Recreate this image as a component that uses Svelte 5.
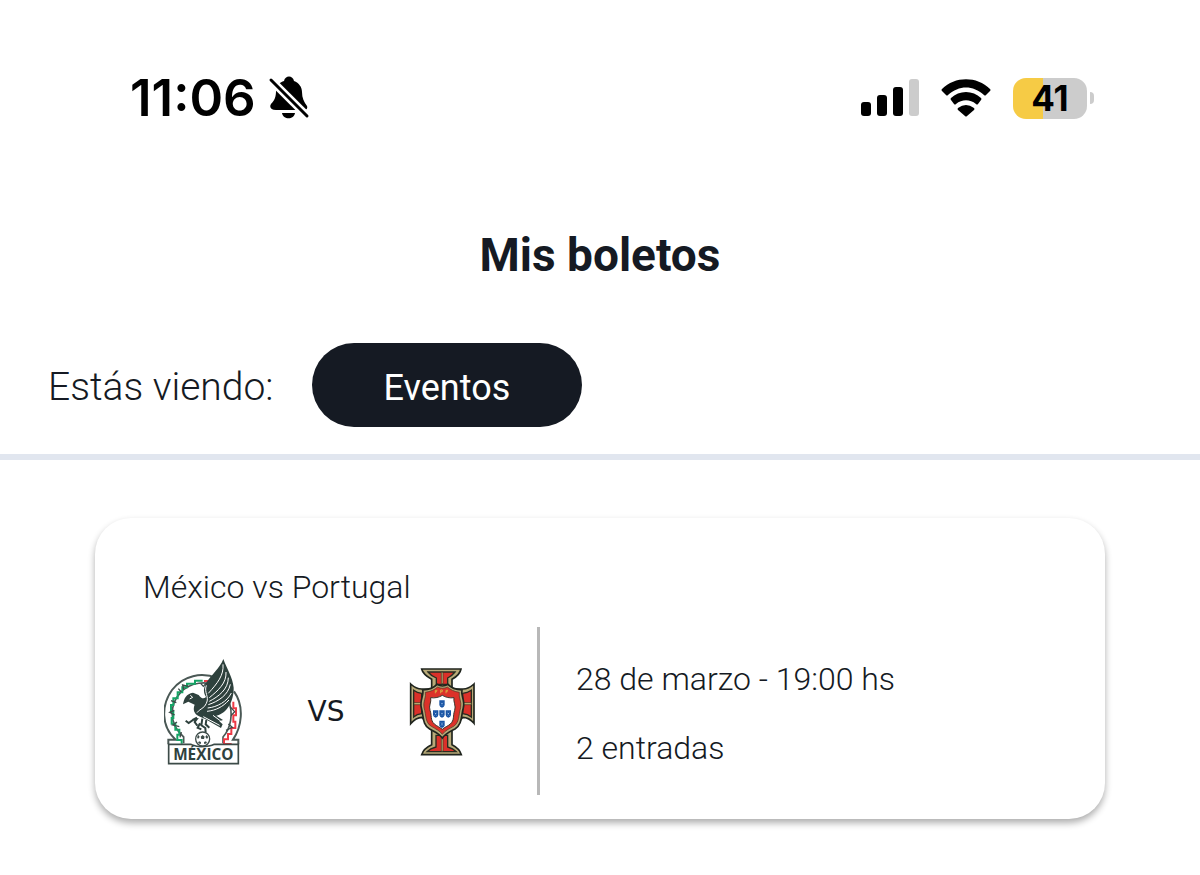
<script>
  const matches = [
    { home: 'México', away: 'Portugal', when: '28 de marzo - 19:00 hs', tickets: '2 entradas' }
  ];
</script>

<div class="screen">
  <div class="status">
    <div class="clock">
      <span class="time">11:06</span>
      <svg class="bell" viewBox="0 0 42 44" role="img" aria-label="Silencio">
        <path d="M8 34C3 34 1 31 3 28C7 24 8 20 8 15C9 9 12 6 16 5C17-1 25-1 26 5C31 7 34 11 34 16C34 22 36 26 39 30C40 33 38 34 35 34Z" />
        <path d="M14 37H27C26 44 15 44 14 37Z" />
        <path d="M2 3L40 41" stroke="#fff" stroke-width="8" />
        <path d="M3 4L39 40" stroke="#000" stroke-width="3" stroke-linecap="round" />
      </svg>
    </div>
    <div class="indicators">
      <svg class="signal" viewBox="0 0 58 38" role="img" aria-label="Señal">
        <rect x="0" y="23" width="10" height="14" rx="3" />
        <rect x="16" y="16" width="10" height="21" rx="3" />
        <rect x="32" y="8" width="10" height="29" rx="3" />
        <rect x="48" y="0" width="10" height="37" rx="3" fill="#ccc" />
      </svg>
      <svg class="wifi" viewBox="0 0 50 38" role="img" aria-label="Wi-Fi">
        <path d="M1 10C14-3 36-3 49 10Q50 11 49 12L45 16Q44 17 43 16C32 6 18 6 7 16Q6 17 5 16L1 12Q0 11 1 10Z" />
        <path d="M10 19C18 11 32 11 40 19Q41 20 40 21L37 25Q36 26 35 25C29 20 21 20 15 25Q14 26 13 25L10 21Q9 20 10 19Z" />
        <path d="M17 29Q25 23 33 29Q34 30 33 31L26 37Q25 38 24 37L17 31Q16 30 17 29Z" />
      </svg>
      <div class="battery"><span class="cell">41</span><span class="tip"></span></div>
    </div>
  </div>

  <header>
    <h1>Mis boletos</h1>
    <div class="filter">
      <span id="viewing">Estás viendo:</span>
      <button type="button" aria-describedby="viewing">Eventos</button>
    </div>
  </header>

  <main>
    {#each matches as match}
      <article>
        <h2>{match.home} vs {match.away}</h2>
        <div class="match">
          <div class="teams">
            <svg class="mexico" viewBox="27 27 237 321" role="img" aria-label={match.home}>
              <g fill="none">
                <path d="M40 286V272H62C17 232 19 168 51 123C84 79 141 68 187 88M237 127C270 174 259 235 234 272H250V286" stroke="#4a5855" stroke-width="6" />
                <path d="M86 283V264C39 223 44 166 77 130C109 98 155 96 182 110M218 149C239 194 225 242 204 264V283" stroke="#4a5855" stroke-width="5" />
                <path d="M143 95H120V104H96V115H82V130H68V148H55V168H48V188H55V207H50V224H61V242H73V257H67V273H80V284" stroke="#16a365" stroke-width="6" />
                <path d="M147 96H170V103H184M235 158V178H243V199H235V218H241V237H229V255H219V271H207V285H230" stroke="#ed3b46" stroke-width="6" />
                <path d="M79 129L70 119M86 122L83 108L102 113M137 103L145 112L153 103M64 161L48 155M58 184L44 190L59 198M66 219L53 228L73 233M79 249L75 265M225 173L239 188L228 200M220 225L232 235L213 244" stroke="#3c4b48" stroke-width="4" />
              </g>
              <path d="M41 286H107C118 290 123 293 138 293S169 291 178 286H250V344H41Z" fill="#fff" stroke="#3c4b48" stroke-width="5" />
              <path d="M205 30C194 59 170 76 153 102C145 119 145 130 153 144C146 151 139 149 131 138L114 131C94 134 87 148 84 166L100 158L119 167C113 182 117 194 132 202L152 211L198 237L203 226L193 217L204 213L184 200C214 194 237 158 236 116C233 86 216 60 205 30Z" fill="#2e413d" />
              <g fill="none" stroke="#fff" stroke-width="3">
                <path d="M204 46C207 79 187 103 160 133" />
                <path d="M213 69C215 102 190 124 163 146" />
                <path d="M220 86C220 121 190 143 163 157" />
                <path d="M226 106C219 139 190 157 160 167" />
                <path d="M229 132C216 158 187 174 158 177" />
                <path d="M222 153C203 174 183 184 156 187" />
                <path d="M154 109C146 131 164 143 154 163C149 178 133 180 126 191" />
                <path d="M106 139L113 145L104 150M145 203L194 229M174 199L197 216" />
              </g>
              <path d="M92 215L101 222L115 212L125 211L119 219L127 230M126 206L113 213M142 209L139 229L151 237L152 251M135 223L128 236L139 241M154 213L152 226L163 236" fill="none" stroke="#2e413d" stroke-width="6" />
              <circle cx="143" cy="270" r="21" fill="#fff" stroke="#3c4b48" stroke-width="4" />
              <path d="M137 263L143 258L149 263L147 270H139ZM126 264L131 258L134 264L129 270ZM160 264L154 258L151 264L156 270ZM132 277L138 279L137 286L129 282ZM153 277L147 279L148 286L156 282Z" fill="#3c4b48" />
              <text x="145" y="334" text-anchor="middle">MÉXICO</text>
            </svg>
            <span class="versus">VS</span>
            <svg class="portugal" viewBox="42 33 201 267" role="img" aria-label={match.away}>
              <path d="M80 39H198C196 51 185 62 171 70V99H204C215 99 226 94 237 84V202C227 190 216 184 203 184L171 220V266C185 273 195 282 199 296H80C84 282 95 273 110 266V220L81 184C68 184 57 191 47 203V84C58 94 69 99 80 99H110V70C96 62 83 52 80 39Z" fill="#b8aa78" stroke="#20251e" stroke-width="5" />
              <path d="M99 48H180C172 58 164 63 158 66V85H124V66C114 62 106 57 99 48ZM56 103Q66 111 80 112V173Q66 174 56 183ZM229 103Q218 111 203 112V173Q218 174 229 183ZM123 238H158V273C170 276 178 281 184 287H96C103 280 111 276 123 273Z" fill="#db3029" stroke="#292c20" stroke-width="4" />
              <path d="M139 49H144V83H139ZM139 236H144V286H139ZM57 140H80V146H57ZM203 140H229V146H203Z" fill="#c9b77a" stroke="#3a3421" stroke-width="2" />
              <path d="M83 102C101 101 117 95 126 85C136 91 149 91 159 85C168 95 184 101 201 102C196 117 211 132 205 155C198 181 202 205 180 219C163 228 152 232 142 246C132 232 120 228 104 219C82 207 86 181 79 155C73 133 88 116 83 102Z" fill="#b8aa78" stroke="#20251e" stroke-width="5" />
              <path d="M91 109C107 107 119 101 128 93C137 98 149 98 157 93C166 101 178 107 193 109C190 124 201 138 197 155C190 179 194 198 176 211C161 219 150 224 142 235C134 224 122 219 109 211C90 200 94 178 87 155C83 138 95 122 91 109Z" fill="#dc3229" stroke="#443322" stroke-width="2" />
              <path d="M107 125C119 127 133 124 142 118C151 124 165 127 177 125C174 136 184 150 179 163C173 180 179 192 166 204C158 211 149 213 142 220C134 213 126 211 118 204C105 192 111 178 105 163C100 150 110 138 107 125Z" fill="#fff" stroke="#39352c" stroke-width="3" />
              {#each [[141, 143], [122, 173], [141, 173], [160, 173], [141, 204]] as [x, y]}
                <path transform={`translate(${x} ${y})`} d="M-8-10H8V4Q7 11 0 12Q-7 11-8 4Z" fill="#1753a4" />
                <g transform={`translate(${x} ${y})`} fill="#b9d5f1">
                  <circle cx="-3" cy="-5" r="1" /><circle cx="3" cy="-5" r="1" />
                  <circle cx="0" cy="0" r="2" /><circle cx="-3" cy="5" r="1" /><circle cx="3" cy="5" r="1" />
                </g>
              {/each}
              <path d="M121 112V103H127M121 107H126M137 112V102H142V107H137M153 112V103H159M153 107H158" fill="none" stroke="#d9a43d" stroke-width="3" />
            </svg>
          </div>
          <div class="details">
            <p>{match.when}</p>
            <p>{match.tickets}</p>
          </div>
        </div>
      </article>
    {/each}
  </main>
</div>

<style>
  :global(body) { margin: 0; background: #fff; }
  .screen { color: #151a23; font-family: Roboto, sans-serif; }
  svg { display: block; flex: none; }
  .status {
    display: flex;
    align-items: center;
    justify-content: space-between;
    padding: 68px 106px 0 130px;
    color: #000;
    font-family: Inter, sans-serif;
  }
  .clock, .indicators { display: flex; align-items: center; }
  .clock { gap: 12px; }
  .time { font-size: 51px; line-height: 60px; font-weight: 600; }
  .bell { width: 42px; height: 44px; }
  .indicators { gap: 22px; }
  .signal { width: 58px; height: 38px; }
  .wifi { width: 50px; height: 38px; }
  .battery { display: flex; align-items: center; gap: 3px; }
  .cell {
    width: 74px;
    border-radius: 13px;
    background: linear-gradient(90deg, #f6cb45 41%, #ccc 41%);
    font-size: 35px;
    line-height: 41px;
    font-weight: 700;
    text-align: center;
  }
  .tip { width: 4px; height: 12px; border-radius: 0 6px 6px 0; background: #ccc; }
  header { padding: 99px 48px 27px; border-bottom: 6px solid #e1e6ef; }
  h1 { margin: 0 0 60px; font-size: 46px; line-height: 56px; font-weight: 700; text-align: center; }
  .filter { display: flex; align-items: baseline; gap: 38px; font-size: 39px; font-weight: 300; }
  button {
    padding: 6px 72px 0;
    border: 0;
    border-radius: 42px;
    background: #151a23;
    color: #fff;
    font: 400 36px/78px Roboto, sans-serif;
  }
  main { padding: 58px 95px; }
  article {
    padding: 49px 48px 24px;
    border-radius: 36px;
    background: #fff;
    box-shadow: 0 4px 7px rgb(0 0 0 / 32%);
  }
  h2 { margin: 0 0 20px; font-size: 32px; line-height: 40px; font-weight: 300; }
  .match { display: flex; }
  .teams {
    display: flex;
    align-items: center;
    justify-content: space-between;
    width: 312px;
    padding: 0 61px 0 21px;
    border-right: 3px solid #b8b8b8;
  }
  .mexico { width: 79px; height: 107px; }
  .mexico text { font: 700 46px "Open Sans", sans-serif; fill: #2e413d; }
  .portugal { width: 67px; height: 89px; }
  .versus { font: 400 28px "DejaVu Sans", sans-serif; }
  .details { padding: 18px 36px 12px; font-size: 32px; line-height: 69px; font-weight: 300; }
  p { margin: 0; }
</style>
